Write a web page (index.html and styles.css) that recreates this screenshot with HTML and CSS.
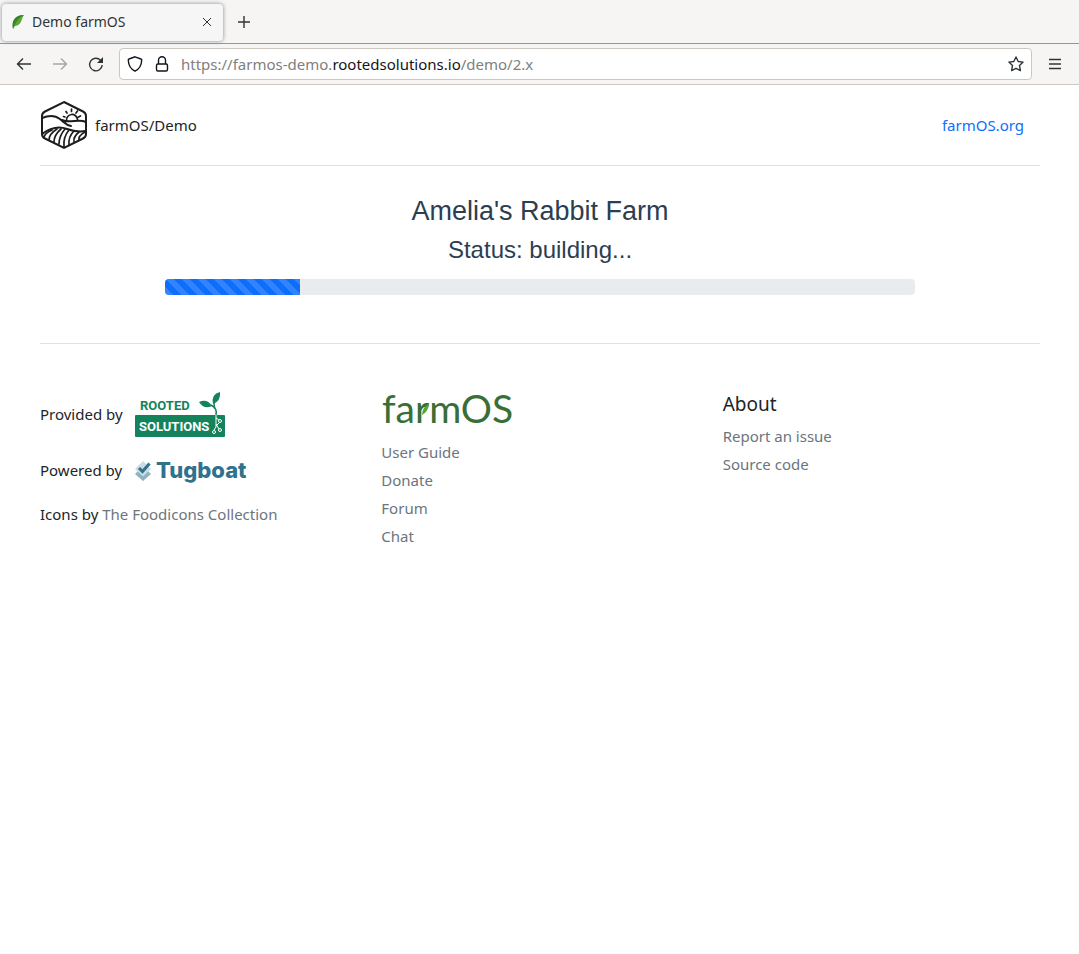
FILE: index.html
```html
<!DOCTYPE html>
<html lang="en">
<head>
<meta charset="utf-8">
<title>Demo farmOS</title>
<link rel="stylesheet" href="styles.css">
</head>
<body>
<div class="browser">
  <div class="tab-strip">
    <div class="tab">
      <svg class="tab-leaf" width="16" height="16" viewBox="0 0 16 16" aria-hidden="true"><path d="M3 15C2 7 5 1 14 1 11 5 12 11 5 12Z" fill="#5aa832"/><path d="M3 15C1 7 5 1 14 1 8 4 5 9 3 15Z" fill="#37852a"/></svg>
      <span class="tab-title">Demo farmOS</span>
      <button class="icon-button tab-close" aria-label="Close tab"><svg width="16" height="16" viewBox="0 0 16 16"><path d="M4 4l8 8M12 4l-8 8"/></svg></button>
    </div>
    <button class="icon-button" aria-label="New tab"><svg width="16" height="16" viewBox="0 0 16 16"><path d="M8 2v12M2 8h12" stroke-width="1.4"/></svg></button>
  </div>
  <div class="toolbar">
    <button class="icon-button" aria-label="Back"><svg width="16" height="16" viewBox="0 0 16 16"><path d="M15 8H1.500M7 2.500L1.500 8 7 13.500" stroke-width="1.400"/></svg></button>
    <button class="icon-button" aria-label="Forward" disabled><svg width="16" height="16" viewBox="0 0 16 16"><path d="M1 8h13.500M9 2.500L14.500 8 9 13.500" stroke-width="1.400"/></svg></button>
    <button class="icon-button" aria-label="Reload"><svg width="16" height="16" viewBox="0 0 16 16"><path d="M14.200 9A6.300 6.300 0 1 1 12.500 4.200" stroke-width="1.400"/><path d="M15 1v6H9z" fill="#2e3436"/></svg></button>
    <div class="address">
      <svg class="line-icon" width="16" height="16" viewBox="0 0 16 16" aria-hidden="true"><path d="M8 .8L14 3c.7.2.8.7.7 1.300C14.500 9 12.500 13 8 15.200 3.500 13 1.500 9 1.300 4.300 1.200 3.700 1.300 3.200 2 3z"/></svg>
      <svg class="line-icon" width="16" height="16" viewBox="0 0 16 16" aria-hidden="true"><rect x="2.500" y="8" width="11" height="7" rx="1.500"/><path d="M4.500 8V4.300a3.500 3.500 0 0 1 7 0V8"/></svg>
      <span class="url">https://farmos-demo.<b>rootedsolutions.io</b>/demo/2.x</span>
      <button class="icon-button" aria-label="Bookmark this page"><svg width="16" height="16" viewBox="0 0 16 16"><path d="M8 1l2.200 4.500 4.900.6-3.600 3.500.9 5L8 12.300 3.600 14.600l.9-5L.9 6.100l4.900-.6z" stroke-width="1.400" stroke-linejoin="round"/></svg></button>
    </div>
    <button class="icon-button menu" aria-label="Open menu"><svg width="16" height="16" viewBox="0 0 16 16"><path d="M2 3.500h12M2 8h12M2 12.500h12" stroke-width="1.300"/></svg></button>
  </div>
</div>
<div class="page">
  <header class="site-header">
    <a class="brand" href="#">
      <svg width="48" height="50" viewBox="0 0 48 50" fill="none" stroke="#1d1d1f" stroke-width="2" stroke-linecap="round" aria-hidden="true">
        <path d="M24 2 43 11.500Q46 13 46 16V34Q46 37 43 38.500L24 48 5 38.500Q2 37 2 34V16Q2 13 5 11.500Z"/>
        <path d="M2 18C9 15 15 15 20 19S26 25 31 26M22 20C30 24 38 18 46 22"/>
        <path d="M2 34C10 28 19 26 27 29S40 32 46 31"/>
        <path d="M26.500 20.500A5.500 5.500 0 1 1 37.500 19.500M25 17l-1.500-.5M27 13l-1-1.500M31.500 11.500V9M36 13l1.500-2M38.500 17l2-1" stroke-width="1.700"/>
        <path d="M12 30Q5 33 4 37M17 29Q9 34 9 40M21 29Q14 35 14 42M25 29Q19 36 19 44M29 30Q23 37 24 47M34 31Q28 37 29 45M39 32Q33 37 34 42M45 32Q38 36 39 40" stroke-width="1.700"/>
      </svg>
      <span>farmOS/Demo</span>
    </a>
    <nav><a class="site-link" href="#">farmOS.org</a></nav>
  </header>
  <main class="status">
    <h1>Amelia's Rabbit Farm</h1>
    <h2>Status: building...</h2>
    <div class="progress" role="progressbar" aria-label="Build progress" aria-valuemin="0" aria-valuemax="100" aria-valuenow="18"><div class="progress-bar" style="width:18%"></div></div>
  </main>
  <footer class="site-footer">
    <div class="credits">
      <p class="credit">Provided by
        <a href="#" aria-label="Rooted Solutions"><svg width="92" height="48" viewBox="0 0 92 48">
          <rect x="0" y="25" width="90" height="22" rx="1" fill="#14825a"/>
          <text class="rooted" x="5" y="20" fill="#14825a">ROOTED</text>
          <text class="rooted" x="4" y="41" fill="#fff">SOLUTIONS</text>
          <path d="M81 25C82 20 80 17 76 15M80 18C78 15 79 12 81 8" fill="none" stroke="#14825a" stroke-width="1.500"/>
          <path d="M64 12Q72 8 77 16 69 20 64 12ZM85 2Q76 4 78 14 86 11 85 2Z" fill="#14825a"/>
          <g fill="none" stroke="#fff"><path d="M81 25V37L79 40M81 28l3 2M81 36l3-3M81 34l3 5"/><circle cx="85" cy="31" r="1.500"/><circle cx="85" cy="40" r="1.500"/><circle cx="79" cy="42" r="1.500"/></g>
        </svg></a>
      </p>
      <p class="credit">Powered by
        <a href="#" aria-label="Tugboat"><svg width="116" height="32" viewBox="0 0 116 32">
          <path d="M1 20l8 7 8-7-3-3-5 5-5-5z" fill="#91b2c1"/><path d="M9 7l8 8-8 7-8-7z" fill="#cbdde3"/><path d="M5 14l3.500 3.500 7-8" fill="none" stroke="#2f728f" stroke-width="3"/>
          <text class="tugboat" x="22" y="24">Tugboat</text>
        </svg></a>
      </p>
      <p class="credit">Icons by&nbsp;<a href="#">The Foodicons Collection</a></p>
    </div>
    <nav class="links" aria-label="farmOS">
      <a class="farm-logo" href="#" aria-label="farmOS"><svg width="150" height="40" viewBox="0 0 150 40"><text class="farmos" x="1" y="33">farmOS</text><path d="M41 25Q41 17 48 14 47 22 41 25Z" fill="#59a52c"/></svg></a>
      <ul><li><a href="#">User Guide</a></li><li><a href="#">Donate</a></li><li><a href="#">Forum</a></li><li><a href="#">Chat</a></li></ul>
    </nav>
    <nav class="links about" aria-label="About">
      <h3>About</h3>
      <ul><li><a href="#">Report an issue</a></li><li><a href="#">Source code</a></li></ul>
    </nav>
  </footer>
</div>
</body>
</html>
```

FILE: styles.css
```css
* { box-sizing: border-box; }
body { margin: 0; background: #fff; color: #212529; font: 15px/24px "Noto Sans", sans-serif; }
h1, h2, h3, p, ul { margin: 0; padding: 0; font-weight: 400; }
ul { list-style: none; }
a { color: #6c757d; text-decoration: none; }
svg { display: block; flex: none; overflow: visible; }
.browser { background: #f6f5f4; color: #2e3436; }
.tab-strip { display: flex; align-items: center; gap: 13px; height: 44px; padding: 1px 2px 0; border-bottom: 1px solid #949796; }
.tab { display: flex; align-items: center; gap: 6px; width: 221px; height: 37px; padding: 0 8px; border-radius: 4px; background: #f6f6f6; box-shadow: 0 0 4px #888; font-size: 14px; }
.tab-title { flex: 1; }
.icon-button { display: flex; align-items: center; justify-content: center; width: 16px; height: 16px; padding: 0; border: 0; background: none; }
.icon-button path { fill: none; stroke: #2e3436; }
.icon-button path[fill] { fill: #2e3436; stroke: none; }
.icon-button:disabled { opacity: .4; }
.toolbar { display: flex; align-items: center; gap: 20px; height: 41px; padding: 0 16px; border-bottom: 1px solid #cdc7c2; }
.address { display: flex; flex: 1; align-items: center; gap: 11px; min-width: 0; height: 32px; margin: 0 -5px; padding: 0 7px; border: 1px solid #cdc7c2; border-radius: 4px; background: #fff; }
.line-icon { fill: none; stroke: #15141a; stroke-width: 1.4; }
.url { flex: 1; overflow: hidden; color: #808080; white-space: nowrap; }
.url b { color: #15141a; font-weight: 400; }
.page { padding: 0 39px 0 40px; }
.site-header { display: flex; align-items: center; justify-content: space-between; height: 81px; padding: 0 16px 0 0; border-bottom: 1px solid #dee2e6; }
.brand { display: flex; align-items: center; gap: 7px; color: #212529; }
.site-link { color: #0d6efd; }
.status { display: flex; flex-direction: column; align-items: center; padding: 28px 0 48px; border-bottom: 1px solid #dee2e6; color: #2c3e50; font-family: "Liberation Sans", Arial, sans-serif; }
.status h1 { margin-bottom: 8px; font-size: 27px; line-height: 34px; }
.status h2 { margin-bottom: 15px; font-size: 24px; line-height: 28px; }
.progress { width: 75%; height: 16px; overflow: hidden; border-radius: 4px; background: #e9ecef; }
.progress-bar { height: 100%; background: linear-gradient(45deg, #ffffff26 25%, transparent 25%, transparent 50%, #ffffff26 50%, #ffffff26 75%, transparent 75%) 0 0 / 16px 16px #0d6efd; }
.site-footer { display: grid; grid-template-columns: repeat(3, 1fr); gap: 24px; padding-top: 46px; }
.credits { display: flex; flex-direction: column; gap: 16px; }
.credit { display: flex; align-items: center; gap: 12px; }
.credit:last-child { gap: 0; }
.rooted { font: 700 13px Roboto, sans-serif; }
.tugboat { fill: #2f728f; font: 800 22px Inter, sans-serif; }
.farmos { fill: #396f36; font: 400 39px Lato, sans-serif; }
.farm-logo { display: block; margin-bottom: 10px; }
.links li { margin-bottom: 4px; }
.about h3 { margin: 2px 0 8px; color: #212529; font-size: 19px; line-height: 24px; }
```
